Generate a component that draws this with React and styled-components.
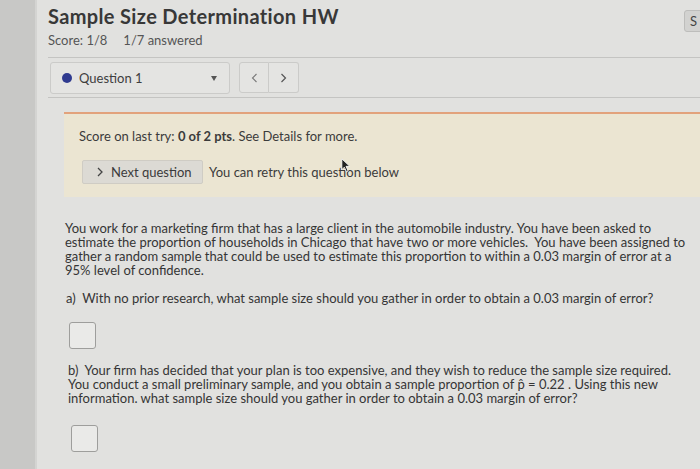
import React from 'react';
import styled, { createGlobalStyle } from 'styled-components';

const GlobalStyle = createGlobalStyle`
  html, body {
    margin: 0;
    padding: 0;
    background: #e1e1df;
  }
  body {
    font-family: Lato, "Open Sans", sans-serif;
    color: #3b3b3b;
  }
`;

const App = () => {
  return (
    <>
      <GlobalStyle />
      <Page>
        <Sidebar />
        <Main>
          <Header>
            <Title>Sample Size Determination HW</Title>
            <SmallButton>S</SmallButton>
          </Header>
          <ScoreLine>
            <span>Score: 1/8</span>
            <span>1/7 answered</span>
          </ScoreLine>

          <QuestionBar>
            <Dropdown>
              <Dot />
              <DropLabel>Question 1</DropLabel>
              <Caret />
            </Dropdown>
            <NavGroup>
              <NavButton>
                <svg width="7" height="10" viewBox="0 0 7 10">
                  <polyline points="5.5,1 1.5,5 5.5,9" fill="none" stroke="#777" strokeWidth="1.1" />
                </svg>
              </NavButton>
              <NavButton>
                <svg width="7" height="10" viewBox="0 0 7 10">
                  <polyline points="1.5,1 5.5,5 1.5,9" fill="none" stroke="#555" strokeWidth="1.2" />
                </svg>
              </NavButton>
            </NavGroup>
          </QuestionBar>

          <Feedback>
            <FeedbackText>
              Score on last try: <b>0 of 2 pts</b>. See Details for more.
            </FeedbackText>
            <FeedbackRow>
              <NextButton>
                <svg width="6" height="10" viewBox="0 0 6 10">
                  <polyline points="1,1 5,5 1,9" fill="none" stroke="#444" strokeWidth="1.3" />
                </svg>
                Next question
              </NextButton>
              <RetryText>
                You can retry this question below
                <Cursor viewBox="0 0 12 18">
                  <path d="M1 1 L1 14 L4 11 L6.5 16.5 L8.5 15.5 L6 10 L10.5 10 Z" fill="#222" stroke="#fff" strokeWidth="1" />
                </Cursor>
              </RetryText>
            </FeedbackRow>
          </Feedback>

          <Question>
            <Para>
              You work for a marketing firm that has a large client in the automobile industry. You have been asked to
              estimate the proportion of households in Chicago that have two or more vehicles.&nbsp; You have been assigned to
              gather a random sample that could be used to estimate this proportion to within a 0.03 margin of error at a
              95% level of confidence.
            </Para>
            <Para $indent={1}>a)&nbsp; With no prior research, what sample size should you gather in order to obtain a 0.03 margin of error?</Para>
            <AnswerBox $indent={4} $gap={17} />
            <Para $indent={3}>
              b)&nbsp; Your firm has decided that your plan is too expensive, and they wish to reduce the sample size required.
              You conduct a small preliminary sample, and you obtain a sample proportion of p̂ = 0.22 . Using this new
              information. what sample size should you gather in order to obtain a 0.03 margin of error?
            </Para>
            <AnswerBox $indent={6} $gap={20} />
          </Question>
        </Main>
      </Page>
    </>
  );
};

const Page = styled.div`
  display: flex;
  min-height: 469px;
  overflow: hidden;
`;

const Sidebar = styled.div`
  width: 35px;
  flex-shrink: 0;
  background: #c8c8c6;
  border-right: 2px solid #d4d4d2;
`;

const Main = styled.div`
  flex: 1;
  padding-left: 11px;
  min-width: 0;
`;

const Header = styled.div`
  display: flex;
  justify-content: space-between;
  align-items: flex-start;
  padding-top: 4px;
`;

const Title = styled.h1`
  margin: 0;
  font-size: 20px;
  line-height: 24px;
  letter-spacing: 0.35px;
  font-weight: 700;
  color: #383838;
`;

const SmallButton = styled.div`
  margin: 6px -6px -6px 0;
  width: 22px;
  height: 22px;
  background: #d2d2d0;
  border: 1px solid #bdbdbb;
  border-radius: 3px;
  font-size: 13px;
  line-height: 20px;
  padding-left: 5px;
  box-sizing: border-box;
  color: #444;
`;

const ScoreLine = styled.div`
  display: flex;
  gap: 16px;
  margin-top: 4px;
  font-size: 13px;
  line-height: 16px;
  color: #555;
`;

const QuestionBar = styled.div`
  display: flex;
  align-items: flex-start;
  gap: 9px;
  margin-top: 9px;
  height: 41px;
  padding: 4px 0 0 2px;
  box-sizing: border-box;
  border-top: 1px solid #c4c4c2;
  border-bottom: 1px solid #c4c4c2;
`;

const Dropdown = styled.div`
  display: flex;
  align-items: center;
  width: 180px;
  height: 32px;
  box-sizing: border-box;
  padding: 0 12px 0 11px;
  border: 1px solid #cbcbc9;
  border-radius: 3px;
  background: #e4e4e2;
`;

const Dot = styled.span`
  width: 10px;
  height: 10px;
  border-radius: 50%;
  background: #2f3a8f;
  margin-right: 7px;
`;

const DropLabel = styled.span`
  flex: 1;
  font-size: 13px;
  color: #3e3e3e;
`;

const Caret = styled.span`
  width: 0;
  height: 0;
  border-left: 3.5px solid transparent;
  border-right: 3.5px solid transparent;
  border-top: 5px solid #555;
`;

const NavGroup = styled.div`
  display: flex;
`;

const NavButton = styled.div`
  width: 30px;
  height: 31px;
  box-sizing: border-box;
  border: 1px solid #cbcbc9;
  background: #e4e4e2;
  display: flex;
  align-items: center;
  justify-content: center;
  &:first-child {
    border-radius: 3px 0 0 3px;
  }
  &:last-child {
    border-left: none;
    border-radius: 0 3px 3px 0;
  }
`;

const Feedback = styled.div`
  margin: 14px 0 0 16px;
  background: #ebe5d2;
  border-top: 2px solid #e2a27c;
  padding: 13px 0 13px 15px;
`;

const FeedbackText = styled.div`
  font-size: 13px;
  line-height: 18px;
  color: #3b3b3b;
`;

const FeedbackRow = styled.div`
  display: flex;
  align-items: center;
  gap: 6px;
  margin-top: 15px;
  padding-left: 3px;
`;

const NextButton = styled.div`
  display: flex;
  align-items: center;
  gap: 8px;
  width: 121px;
  height: 24px;
  box-sizing: border-box;
  padding-left: 14px;
  background: #dcdad4;
  border: 1px solid #cfccc4;
  border-radius: 2px;
  font-size: 13px;
  color: #3b3b3b;
`;

const RetryText = styled.span`
  position: relative;
  font-size: 13px;
  color: #3b3b3b;
`;

const Cursor = styled.svg`
  position: absolute;
  left: 132px;
  top: -6px;
  width: 10px;
  height: 15px;
`;

const Question = styled.div`
  padding: 24px 0 0 17px;
  width: 625px;
`;

const Para = styled.p`
  margin: 0 0 14px ${p => p.$indent || 0}px;
  font-size: 13px;
  line-height: 14px;
  color: #353535;
`;

const AnswerBox = styled.div`
  width: 27px;
  height: 27px;
  box-sizing: border-box;
  margin: ${p => p.$gap || 14}px 0 14px ${p => p.$indent || 0}px;
  border: 1.5px solid #9e9e9c;
  border-radius: 3px;
  background: #eaeae8;
`;

export default App;
